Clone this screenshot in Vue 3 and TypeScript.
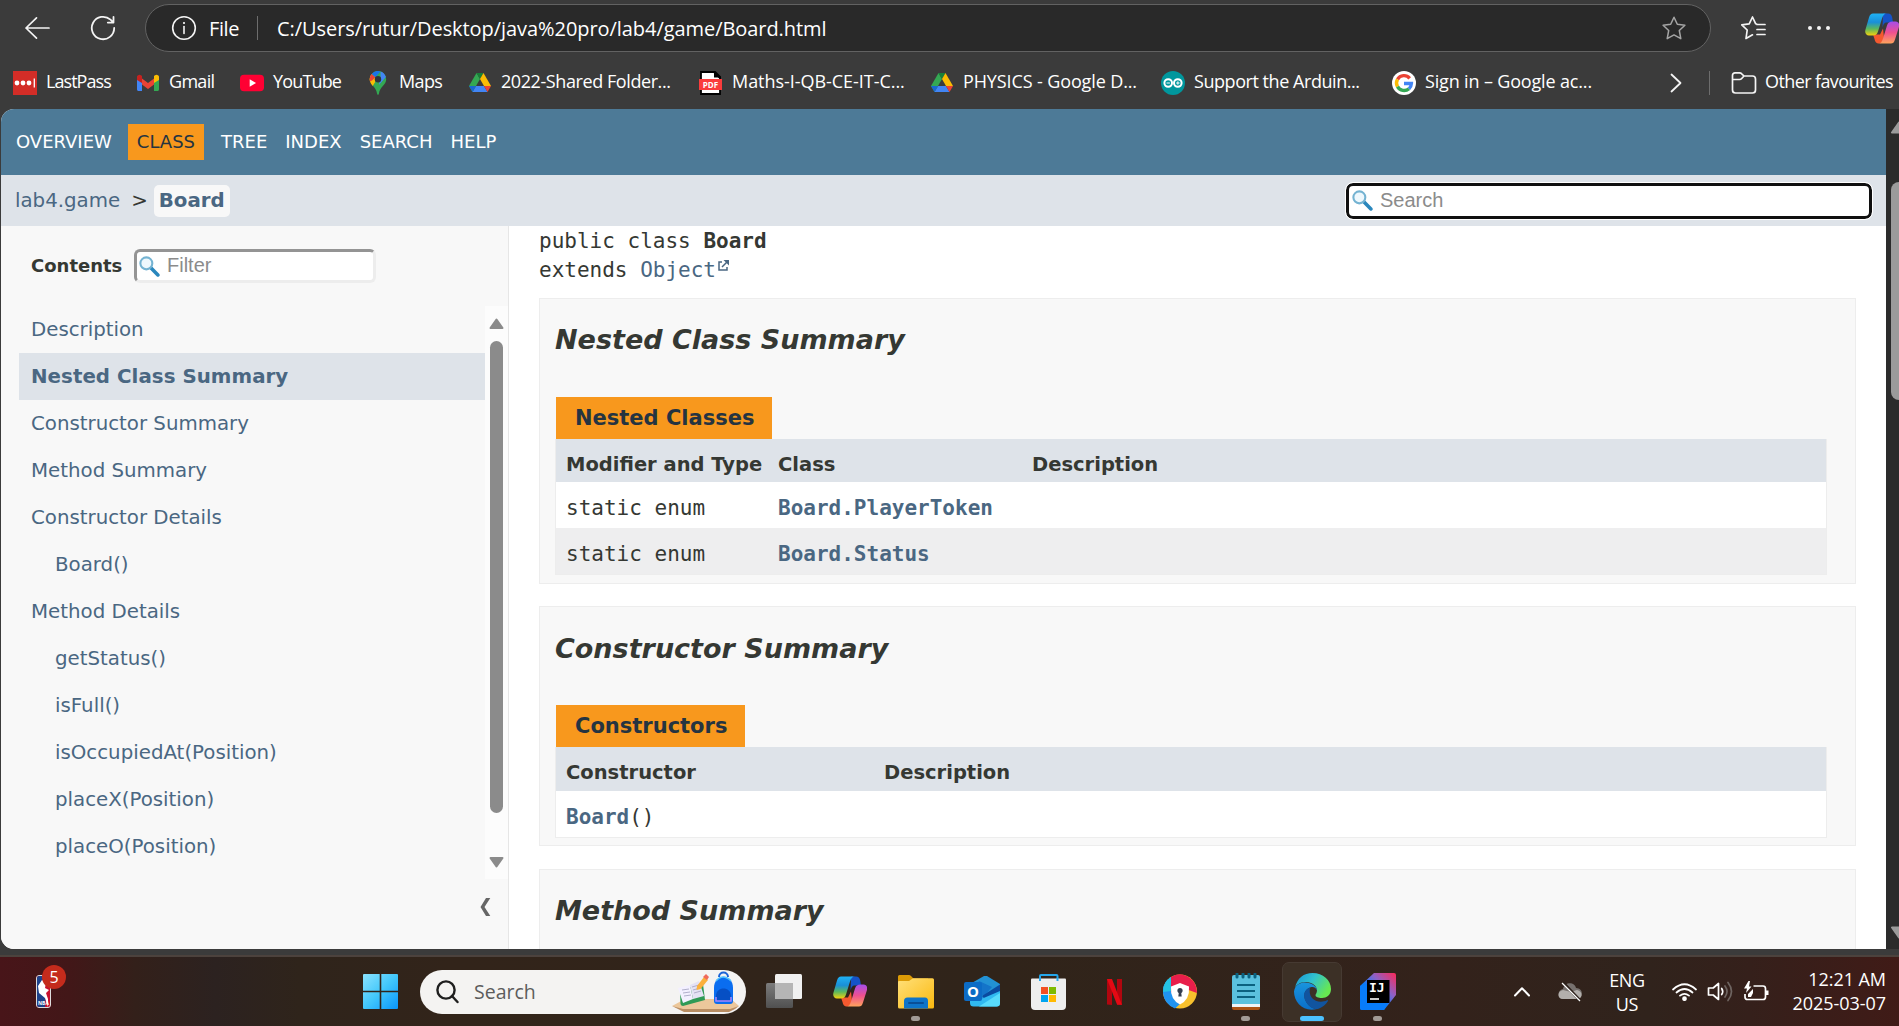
<script setup lang="ts">
interface Bookmark { icon: string; label: string; width: number; spacing: number }
interface TocEntry { label: string; nested?: boolean; active?: boolean }
interface TaskApp { id: string; running?: boolean; active?: boolean }

const bookmarks: Bookmark[] = [
  { icon: 'lastpass', label: 'LastPass', width: 123, spacing: -0.95 },
  { icon: 'gmail', label: 'Gmail', width: 104, spacing: -0.7 },
  { icon: 'youtube', label: 'YouTube', width: 126, spacing: -0.85 },
  { icon: 'maps', label: 'Maps', width: 102, spacing: -0.65 },
  { icon: 'drive', label: '2022-Shared Folder...', width: 231, spacing: -0.42 },
  { icon: 'pdf', label: 'Maths-I-QB-CE-IT-C...', width: 231, spacing: -0.04 },
  { icon: 'drive', label: 'PHYSICS - Google D...', width: 231, spacing: -0.12 },
  { icon: 'arduino', label: 'Support the Arduin...', width: 231, spacing: -0.45 },
  { icon: 'google', label: 'Sign in – Google ac...', width: 231, spacing: -0.16 },
]

const navLinks = ['OVERVIEW', 'CLASS', 'TREE', 'INDEX', 'SEARCH', 'HELP']

const toc: TocEntry[] = [
  { label: 'Description' },
  { label: 'Nested Class Summary', active: true },
  { label: 'Constructor Summary' },
  { label: 'Method Summary' },
  { label: 'Constructor Details' },
  { label: 'Board()', nested: true },
  { label: 'Method Details' },
  { label: 'getStatus()', nested: true },
  { label: 'isFull()', nested: true },
  { label: 'isOccupiedAt(Position)', nested: true },
  { label: 'placeX(Position)', nested: true },
  { label: 'placeO(Position)', nested: true },
]

const nested = ['Board.PlayerToken', 'Board.Status']

const apps: TaskApp[] = [
  { id: 'taskview' },
  { id: 'copilot' },
  { id: 'explorer', running: true },
  { id: 'outlook' },
  { id: 'store' },
  { id: 'netflix' },
  { id: 'secure' },
  { id: 'notepad', running: true },
  { id: 'edge', active: true },
  { id: 'intellij', running: true },
]
</script>

<template>
  <div class="screen">
    <svg class="defs" width="0" height="0">
      <defs>
        <linearGradient id="cpA" x1="0" y1="0" x2="0" y2="1">
          <stop offset="0" stop-color="#1fb2f5" /><stop offset=".4" stop-color="#1a8fd8" /><stop offset=".7" stop-color="#5cb85c" /><stop offset="1" stop-color="#f5d10d" />
        </linearGradient>
        <linearGradient id="cpB" x1="0" y1="0" x2="0" y2="1">
          <stop offset="0" stop-color="#a64dea" /><stop offset=".5" stop-color="#ee5090" /><stop offset="1" stop-color="#ffa35c" />
        </linearGradient>
        <symbol id="copilot" viewBox="0 0 34 30">
          <path d="M18 0h5c2.500 0 3.500 1.500 4.200 4L28 9h-6c-3 0-3.500 2-4.500 5z" fill="#1553c8" />
          <path d="M8 21h7l3-6 1 9c-.5 3-2 6-5 6-3 0-4-2-4.500-4.500z" fill="#f4592f" />
          <path d="M8 0h14c-3 0-4 2-5 5l-4 13c-1 3-2.500 4-5.500 4H4c-3 0-4.500-2.500-3.500-6L4 4c1-3 2-4 4-4z" fill="url(#cpA)" />
          <path d="M26 30H13c3 0 4-2 5-5l4-13c1-3 2.500-4 5.500-4h3c3 0 4.300 2.500 3.300 6L30 26c-1 3-2 4-4 4z" fill="url(#cpB)" />
        </symbol>
        <symbol id="lens" viewBox="0 0 20 20">
          <path d="M11 11l7 7" stroke="#2a87bd" stroke-width="3.400" stroke-linecap="round" />
          <circle cx="7" cy="7" r="5.700" fill="#eef8fd" stroke="#74b3d2" stroke-width="2" />
        </symbol>
      </defs>
    </svg>

    <header class="toolbar">
      <div class="tool back"><svg width="26" height="24" viewBox="0 0 26 24" fill="none" stroke="#f4f4f4" stroke-width="1.700" stroke-linecap="round" stroke-linejoin="round"><path d="M25 12H2M12.500 1.800L2 12l10.500 10.200" /></svg></div>
      <div class="tool reload"><svg width="26" height="26" viewBox="0 0 26 26" fill="none" stroke="#f4f4f4" stroke-width="1.800" stroke-linecap="round" stroke-linejoin="round"><path d="M24.200 13A11.200 11.200 0 1 1 20.500 4.700l2.300 2.200M23.500 2v5.600h-5.700" /></svg></div>
      <div class="address">
        <svg class="info" width="26" height="26" viewBox="0 0 26 26" fill="none" stroke="#f4f4f4" stroke-width="1.600"><circle cx="13" cy="13" r="11.300" /><path d="M13 11.500v7" stroke-linecap="round" /><circle cx="13" cy="8" r=".7" fill="#f4f4f4" stroke-width="1" /></svg>
        <span class="scheme">File</span>
        <i class="bar"></i>
        <span class="url">C:/Users/rutur/Desktop/java%20pro/lab4/game/Board.html</span>
        <svg class="star" width="26" height="26" viewBox="0 0 26 26" fill="none" stroke="#a5a5a5" stroke-width="1.500" stroke-linejoin="round"><path d="M13 2.200l3.300 7 7.600 1-5.600 5.300 1.500 8.200-6.800-3.800-6.800 3.800 1.500-8.200L2.100 10.200l7.600-1z" /></svg>
      </div>
      <div class="tool favs"><svg width="26" height="26" viewBox="0 0 26 26" fill="none" stroke="#f4f4f4" stroke-width="1.700" stroke-linecap="round" stroke-linejoin="round"><path d="M16.500 9l-.8-.2L12.500 2 9.200 8.800l-7.400 1L7.200 15 6 23.500l6.500-3.700M17 9.500h8M17 14.500h8M17 19.500h8" /></svg></div>
      <div class="tool more"><i></i><i></i><i></i></div>
      <svg class="assistant" width="34" height="31"><use href="#copilot" /></svg>
    </header>

    <nav class="bookmarks">
      <a v-for="b in bookmarks" :key="b.label" class="bookmark" :style="{ width: b.width + 'px' }">
        <svg width="24" height="24" viewBox="0 0 24 24">
          <g v-if="b.icon === 'lastpass'"><path fill="#d32d27" d="M0 0h24v24H0z" /><circle cx="4" cy="12" r="2.400" fill="#fff" /><circle cx="10" cy="12" r="2.400" fill="#fff" /><circle cx="16" cy="12" r="2.400" fill="#fff" /><path d="M21.300 7.500v9" stroke="#fff" stroke-width="1.300" /></g>
          <g v-else-if="b.icon === 'gmail'"><path d="M1 5.500v13c0 .8.700 1.500 1.500 1.500H6V8.500z" fill="#4285f4" /><path d="M23 5.500v13c0 .8-.7 1.500-1.500 1.500H18V8.500z" fill="#34a853" /><path d="M6 7.500v6L12 18l6-4.500v-6L12 12z" fill="#ea4335" /><path d="M1 6c0-2 2.500-3 4-1.800l1 .8v7L1 9z" fill="#c5221f" /><path d="M23 6c0-2-2.500-3-4-1.800l-1 .8v7l5-3z" fill="#fbbc04" /></g>
          <g v-else-if="b.icon === 'youtube'"><rect y="3.700" width="24" height="16.500" rx="4" fill="#ff0033" /><path d="M9.700 8.300v7.400l6.300-3.700z" fill="#fff" /></g>
          <g v-else-if="b.icon === 'maps'"><path d="M12 0a8.200 8.200 0 0 0-8.200 8.200c0 6 6.400 7.300 7.300 14.600.3 1.500 1.500 1.500 1.800 0 .9-7.300 7.300-8.600 7.300-14.600A8.200 8.200 0 0 0 12 0z" fill="#34a853" /><path d="M5 12.500A8.200 8.200 0 0 1 5.700 3l3.500 3 0 5-2.500 4z" fill="#fbbc04" /><path d="M5.700 3L9.500 6.200 6 9.500l-2 1C3.300 7.500 4 5 5.700 3z" fill="#ea4335" /><path d="M5.700 3A8.200 8.200 0 0 1 14.500.4L9.500 6.200z" fill="#1a73e8" /><path d="M14.500.4c2.800.9 4.600 2.900 5.400 5.500l-7 8L14.500 6z" fill="#4285f4" /><circle cx="12" cy="8.200" r="3.200" fill="#30343d" /></g>
          <g v-else-if="b.icon === 'drive'"><path d="M8.500 2L1 15l3.500 6L12 8z" fill="#34a853" /><path d="M8.500 2h7L12 8z" fill="#188038" /><path d="M15.500 2L23 15h-7L12 8z" fill="#fbbc04" /><path d="M8 15h8l3.500 6h-15z" fill="#4285f4" /><path d="M16 15h7l-3.500 6z" fill="#ea4335" /><path d="M1 15h7l-3.500 6z" fill="#1967d2" /></g>
          <g v-else-if="b.icon === 'pdf'"><path d="M2 1h13l6 6v16H2z" fill="#fff" stroke="#000" stroke-width="1.800" /><path d="M14 0l8 8v-2.500L16.500 0zM15 1v5.500h6" fill="#000" /><path d="M0 8h23v11H0z" fill="#fa3c3c" /><text x="11.500" y="16.700" text-anchor="middle" class="pdftext">PDF</text></g>
          <g v-else-if="b.icon === 'arduino'"><circle cx="12" cy="12" r="12" fill="#00979d" /><g fill="none" stroke="#fff" stroke-width="2"><circle cx="7.200" cy="12" r="3.800" /><circle cx="16.800" cy="12" r="3.800" /></g><path d="M5.500 12h3.400M15.200 12h3.400M16.900 10.300v3.400" stroke="#fff" /></g>
          <g v-else><circle cx="12" cy="12" r="12" fill="#fff" /><g fill="none" stroke-width="3.400"><path d="M17.700 7.300A7.500 7.500 0 0 0 5.500 8.300" stroke="#ea4335" /><path d="M5.500 8.300a7.500 7.500 0 0 0 0 7.400" stroke="#fbbc04" /><path d="M5.500 15.700a7.500 7.500 0 0 0 11.500 2" stroke="#34a853" /><path d="M17 17.700a7.500 7.500 0 0 0 2.400-5.200H12" stroke="#4285f4" /></g></g>
        </svg>
        <span :style="{ letterSpacing: b.spacing + 'px' }">{{ b.label }}</span>
      </a>
      <svg class="chev" width="12" height="20" viewBox="0 0 12 20" fill="none" stroke="#f4f4f4" stroke-width="1.800" stroke-linecap="round" stroke-linejoin="round"><path d="M1.500 1.500L10.500 10l-9 8.500" /></svg>
      <i class="bar"></i>
      <svg class="folder" width="26" height="24" viewBox="0 0 26 24" fill="none" stroke="#f4f4f4" stroke-width="1.700" stroke-linejoin="round"><path d="M1.500 4.500c0-1.500 1-2.700 2.500-2.700h4.500c1 0 1.600.3 2.200 1L13 5h8.500c1.700 0 3 1.200 3 3v11c0 1.700-1.300 3-3 3h-17c-1.700 0-3-1.300-3-3zM1.500 8.500h7c.9 0 1.600-.3 2.200-1L13 5" /></svg>
      <span class="other">Other favourites</span>
    </nav>

    <div class="viewport">
      <div class="doc">
        <div class="topnav">
          <a v-for="n in navLinks" :key="n" :class="{ current: n === 'CLASS' }">{{ n }}</a>
        </div>
        <div class="subnav">
          <a class="pkg">lab4.game</a><span class="gt">&gt;</span><a class="cls">Board</a>
          <div class="search"><svg width="21" height="21"><use href="#lens" /></svg><span>Search</span></div>
        </div>
        <div class="columns">
          <aside class="toc">
            <div class="tochead"><b>Contents</b><div class="filter"><svg width="21" height="21"><use href="#lens" /></svg><span>Filter</span></div></div>
            <div class="tocbody">
              <ol>
                <li v-for="t in toc" :key="t.label" :class="{ nested: t.nested, active: t.active }">{{ t.label }}</li>
              </ol>
              <div class="scroller">
                <svg width="15" height="11" viewBox="0 0 15 11"><path d="M1.500 10h12L7.500 1.500z" fill="#8b8b8b" stroke="#8b8b8b" stroke-width="2" stroke-linejoin="round" /></svg>
                <i></i>
                <svg class="down" width="15" height="11" viewBox="0 0 15 11"><path d="M1.500 1h12l-6 8.500z" fill="#8b8b8b" stroke="#8b8b8b" stroke-width="2" stroke-linejoin="round" /></svg>
              </div>
            </div>
            <div class="tocfoot"><svg width="11" height="18" viewBox="0 0 11 18"><path d="M6 0h4.300L4.500 9l5.800 9H6L.5 9z" fill="#666" /></svg></div>
          </aside>
          <main>
            <div class="signature"><div>public class <b>Board</b></div><div>extends <a>Object</a><svg width="11" height="11" viewBox="0 0 11 11" fill="none" stroke="#4a6782" stroke-width="1.500"><path d="M4 2H1v8h8V7M4 7l5-5" /><path d="M5.500 0H11v5.500z" fill="#4a6782" stroke="none" /></svg></div></div>
            <section class="first">
              <h2>Nested Class Summary</h2>
              <div class="tab">Nested Classes</div>
              <div class="grid three">
                <div class="row head"><span>Modifier and Type</span><span>Class</span><span>Description</span></div>
                <div v-for="(c, i) in nested" :key="c" class="row" :class="{ alt: i === 1 }"><code>static enum</code><code><b>{{ c }}</b></code><span></span></div>
              </div>
            </section>
            <section class="second">
              <h2>Constructor Summary</h2>
              <div class="tab">Constructors</div>
              <div class="grid two">
                <div class="row head"><span>Constructor</span><span>Description</span></div>
                <div class="row"><code><b>Board</b>()</code><span></span></div>
              </div>
            </section>
            <section class="third"><h2>Method Summary</h2></section>
          </main>
        </div>
      </div>
      <div class="winscroll">
        <svg width="18" height="13" viewBox="0 0 18 13"><path d="M2 11.500h14L9 1.500z" fill="#9b9b9b" stroke="#9b9b9b" stroke-width="2" stroke-linejoin="round" /></svg>
        <i></i>
        <svg class="down" width="18" height="13" viewBox="0 0 18 13"><path d="M2 1.500h14l-7 10z" fill="#9b9b9b" stroke="#9b9b9b" stroke-width="2" stroke-linejoin="round" /></svg>
      </div>
    </div>

    <footer class="taskbar">
      <div class="widgets">
        <svg width="15" height="33" viewBox="0 0 15 33"><rect x=".5" y=".5" width="14" height="32" rx="2.500" fill="#c8102e" stroke="#ddd" /><path d="M1 3q0-2 2-2h5l-2 6 4 10-1 15H3q-2 0-2-2z" fill="#1d428a" /><path d="M6 5l4 3-1 5 4 2-3 3 2 6 0 8-3-9-6-5-1-7 2-3z" fill="#fff" /><text x="2" y="30" class="nba">NBA</text></svg>
        <span class="badge">5</span>
      </div>
      <div class="cell">
        <svg width="35" height="35" viewBox="0 0 35 35"><defs><linearGradient id="win" x1="0" y1="0" x2="1" y2="1" gradientUnits="objectBoundingBox"><stop offset="0" stop-color="#8be3ff" /><stop offset=".5" stop-color="#42c7fb" /><stop offset="1" stop-color="#0995fb" /></linearGradient></defs><path d="M1 0h15.700v16.700H0V1q0-1 1-1zM18.300 0H34q1 0 1 1v15.700H18.300zM0 18.300h16.700V35H1q-1 0-1-1zM18.300 18.300H35V34q0 1-1 1H18.300z" fill="url(#win)" /></svg>
      </div>
      <div class="searchbox">
        <svg class="glass" width="23" height="24" viewBox="0 0 23 24" fill="none" stroke="#1f1f1f" stroke-width="2.400" stroke-linecap="round"><circle cx="10" cy="10" r="8.600" /><path d="M16 16l5.500 6" /></svg>
        <span>Search</span>
        <svg class="art" width="70" height="42" viewBox="0 0 70 42">
          <path d="M1 35L14 28h46l8 7-9 4H12z" fill="#ecc79b" /><path d="M1 35l11 3h47l9-3-4 3-6 3H13z" fill="#b98d63" />
          <path d="M9 19l23-6 2 16-22 6q-2 0-2.500-2z" fill="#2f9a55" /><path d="M7 17l12-3 3 14-10 4z" fill="#f3f0ff" /><path d="M19 14l9-4 5 15-11 3z" fill="#e4e2f4" />
          <path d="M11 19l7-1M12 22l7-1M13 25l7-1M21 16l7-2M22 19l7-2M23 22l7-2" stroke="#a9a7c4" stroke-width=".9" />
          <path d="M26 15l7-9 4 3-7.500 9-4 1z" fill="#fbb03b" /><path d="M32 6l3-3 3 3-2 3z" fill="#ef6a5a" />
          <path d="M48 6c0-6 9-6 9 0" fill="none" stroke="#1a62d6" stroke-width="2" /><path d="M43 17C43 2 62 2 62 17v13q0 3-3 3H46q-3 0-3-3z" fill="#0a6df0" /><path d="M45 10q7-8 15 0" fill="none" stroke="#53c4ff" stroke-width="1.500" /><path d="M45 25c0-10 15-10 15 0v5H45z" fill="#064fc4" /><path d="M45 26v4h15v-4" fill="none" stroke="#a786ff" stroke-width="1.500" />
        </svg>
      </div>
      <div class="apps">
        <div v-for="a in apps" :key="a.id" class="cell" :class="{ active: a.active, running: a.running }">
          <svg v-if="a.id === 'taskview'" width="36" height="35" viewBox="0 0 36 35"><defs><linearGradient id="tvD" x1="0" y1="0" x2="0" y2="1"><stop offset="0" stop-color="#7c7c7c" /><stop offset="1" stop-color="#505050" /></linearGradient></defs><rect x="0" y="9" width="27" height="25" rx="1.500" fill="url(#tvD)" /><rect x="9" y="0" width="27" height="25" rx="1.500" fill="#f0f0f0" /><path d="M9 9h18v16H9z" fill="#b5b5b5" /></svg>
          <svg v-else-if="a.id === 'copilot'" width="34" height="31"><use href="#copilot" /></svg>
          <svg v-else-if="a.id === 'explorer'" width="36" height="34" viewBox="0 0 36 34"><defs><linearGradient id="fo" x1="0" y1="0" x2="1" y2="1"><stop offset="0" stop-color="#ffe07a" /><stop offset="1" stop-color="#fbb90f" /></linearGradient></defs><path d="M0 1.500Q0 0 1.500 0h9.500q1 0 2 1l2.500 2.500H30V10H0z" fill="#dc9b06" /><path d="M0 7q0-1 1-1h10l4-2.700h19.500q1.500 0 1.500 1.500V32q0 1.500-1.500 1.500h-33Q0 33.500 0 32z" fill="url(#fo)" /><path d="M6 33.500V26q0-3.500 3.500-3.500H27q3 0 3 3.500v7.500z" fill="#0f74c8" /><path d="M11 28h14" stroke="#0a4f96" stroke-width="2" stroke-linecap="round" /></svg>
          <svg v-else-if="a.id === 'outlook'" width="36" height="31" viewBox="0 0 36 31"><path d="M6 8L20 0q1.500-.5 3 0l13 8v10L18 25 6 20z" fill="#2291d4" /><path d="M15 5l13 6-8 9-9-5z" fill="#1474c9" /><path d="M18 20L36 8.500V16l-15 7z" fill="#0a4aa0" /><path d="M6 19l9 5L36 15v12q0 3.500-3.500 3.500h-23Q6 30.500 6 27z" fill="#30b9f0" /><path d="M15 30.500L36 17v10q0 3.500-3.500 3.500z" fill="#58dbfb" /><rect y="6" width="18" height="19" rx="2" fill="#0c6cc6" /><text x="9" y="21" text-anchor="middle" class="outlook">O</text></svg>
          <svg v-else-if="a.id === 'store'" width="35" height="36" viewBox="0 0 35 36"><path d="M9 8V2q0-1 1-1h15.500q1 0 1 1v6" fill="none" stroke="#25a6ea" stroke-width="2" /><path d="M1 4.500h33q1 0 1 1V32q0 4-4 4H4q-4 0-4-4V5.500q0-1 1-1z" fill="#eee" /><path d="M9 4v3M26.500 4v3" stroke="#25a6ea" stroke-width="2" /><path d="M10 13h7v7h-7z" fill="#f25022" /><path d="M18 13h7v7h-7z" fill="#7fba00" /><path d="M10 21h7v7h-7z" fill="#00a4ef" /><path d="M18 21h7v7h-7z" fill="#ffb900" /></svg>
          <svg v-else-if="a.id === 'netflix'" width="15" height="26" viewBox="0 0 15 26"><path d="M0 0h5v26l-5-.5zM10 0h5v25.500l-5 .5z" fill="#b1060f" /><path d="M0 0h5l10 26-5-.5z" fill="#e50914" /></svg>
          <svg v-else-if="a.id === 'secure'" width="34" height="35" viewBox="0 0 34 35"><circle cx="17" cy="17.500" r="17" fill="#f7c02d" /><path d="M8 3Q17-3 27 4q7 5 7 15L17 13 8 20Q6 10 8 3z" fill="#e81e4b" /><path d="M8 3Q-1 9 0 19q1 11 12 15.500L17 30 8 18z" fill="#1f93f1" /><path d="M8 3Q0 8 0 18l8-1z" fill="#24c2e3" /><path d="M17 9l9 3.500q1 13-9 18-10-5-9-18z" fill="#fff" /><circle cx="17" cy="16.500" r="2.600" fill="#333d4f" /><path d="M16 17h2l.7 5.500h-3.400z" fill="#333d4f" /></svg>
          <svg v-else-if="a.id === 'notepad'" width="28" height="37" viewBox="0 0 28 37"><path d="M0 30h28v5q0 2-2 2H2q-2 0-2-2z" fill="#aa5215" /><path d="M0 28h28v6H0z" fill="#eef3f6" /><path d="M0 4q0-2 2-2h24q2 0 2 2v27H0z" fill="#5bc1de" /><path d="M5 12h18M5 18h18M5 24h18" stroke="#0b6280" stroke-width="2" /><path d="M5 1v3M11 1v3M17 1v3M23 1v3" stroke="#0b6280" stroke-width="3" stroke-linecap="round" /></svg>
          <svg v-else-if="a.id === 'edge'" width="37" height="37" viewBox="0 0 37 37"><defs><linearGradient id="edA" x1="0" y1="0" x2="1" y2=".5"><stop offset="0" stop-color="#1694d8" /><stop offset=".5" stop-color="#31c2ce" /><stop offset="1" stop-color="#67e851" /></linearGradient><linearGradient id="edB" x1="0" y1="0" x2="0" y2="1"><stop offset="0" stop-color="#1994dd" /><stop offset="1" stop-color="#0a6fc9" /></linearGradient></defs><path d="M1 15C3 5 10 0 18.500 0 29 0 37 7 37 16c0 6-4.500 9-9 9-4 0-6.500-1-6.500-2.700 0-1.300 1.500-2 1.500-5C23 13 18 9 12 9 6 9 2 12 1 15z" fill="url(#edA)" /><path d="M0 18.500C1 12 6 9.500 11 9.500c7 0 11.800 4 12 8-1-3-3.500-4-5.500-3.500C12 15.500 9 20 11 26c1.500 5 6 9.500 12 10C10 39.500 0 30 0 18.500z" fill="url(#edB)" /><path d="M16 14.500C10 17 9 22 11 27c2.500 6 8 9.500 13 9 4.500-1.500 8-4.500 10-8 .4-.7-.3-1-1-.7-5 2.700-12 1.500-15-2.300-2.700-3.400-2.500-7-2-10.500z" fill="#11549f" /></svg>
          <svg v-else width="37" height="37" viewBox="0 0 37 37"><defs><linearGradient id="ij" x1="0" y1="1" x2="1" y2="0"><stop offset=".4" stop-color="#087cfa" /><stop offset=".65" stop-color="#8b62c8" /><stop offset="1" stop-color="#fe2857" /></linearGradient></defs><path d="M0 13L14 0h20q2 0 2 2v20L24 37H2q-2 0-2-2z" fill="url(#ij)" /><path d="M0 13l10-3v20h18l-4 7H2q-2 0-2-2z" fill="#087cfa" /><path d="M7 7h22.500v23H7z" fill="#000" /><text x="9" y="18.500" class="ijtext">IJ</text><path d="M10 26h9" stroke="#fff" stroke-width="1.600" /></svg>
        </div>
      </div>
      <div class="tray">
        <div class="t48"><svg width="18" height="11" viewBox="0 0 18 11" fill="none" stroke="#fff" stroke-width="2" stroke-linecap="round" stroke-linejoin="round"><path d="M2 9.500l7-7.300 7 7.300" /></svg></div>
        <div class="t48"><svg class="cloud" width="26" height="20" viewBox="0 0 26 20"><path d="M6 7C8-1 18 0 19 6c7 0 8 9 2 11H6C0 17 0 8 6 7z" fill="#77716e" /><path d="M6 8l8 2 6-2c6 1 6 9 0 9H6C0 17 0 9 6 8z" fill="#b3afac" /><path d="M6 .5l17 18" stroke="#2d211b" stroke-width="3" /><path d="M5 1l18 18" stroke="#fff" stroke-width="1.200" /></svg></div>
        <div class="lang"><div>ENG</div><div>US</div></div>
        <div class="t36"><svg width="25" height="18" viewBox="0 0 25 18" fill="none" stroke="#fff" stroke-width="1.700" stroke-linecap="round"><path d="M1 6.500Q12.500-4 24 6.500M4.500 9.500q8-7 16 0M8 12.700q4.500-3.700 9 0" /><circle cx="12.500" cy="15.700" r="1.500" fill="#fff" /></svg></div>
        <div class="t36"><svg width="26" height="21" viewBox="0 0 26 21" fill="none" stroke="#fff" stroke-width="1.700" stroke-linecap="round" stroke-linejoin="round"><path d="M1.500 7h4.700l5.300-4.500v16L6.200 14H1.500zM14.700 7.500q2 3 0 6" /><path d="M18 5q4 5.500 0 11M21 1.500q7 9 0 18" stroke="#6e6460" /></svg></div>
        <div class="t36"><svg width="26" height="22" viewBox="0 0 26 22" fill="none" stroke="#fff" stroke-width="1.700" stroke-linejoin="round"><path d="M10.500 5H20q2.500 0 2.500 2.500v8.500q0 2.500-2.500 2.500H4.500Q2 18.500 2 16v-3" /><path d="M24 9.500v4.500" stroke-width="3" /><path d="M5.500 0L1 7.500h3L3 12l5.500-6.500H6L7 0zM5 16v-3l5-5v4L8 16z" fill="#fff" stroke="none" /></svg></div>
        <div class="clock"><div>12:21 AM</div><div>2025-03-07</div></div>
      </div>
    </footer>
  </div>
</template>

<style>
html, body { margin: 0; background: #3b3b3b; overflow: hidden; }
</style>

<style scoped>
* { box-sizing: border-box; }
.screen { width: 1899px; height: 1026px; display: flex; flex-direction: column; overflow: hidden; background: #3b3b3b; font-family: "Open Sans", "Noto Sans", sans-serif; color: #fff; white-space: nowrap; }
.defs { position: absolute; }
svg { display: block; flex: none; }
.toolbar { height: 56px; flex: none; display: flex; align-items: center; padding-left: 13px; }
.tool { display: flex; align-items: center; justify-content: center; width: 48px; height: 56px; }
.reload { margin-left: 18px; margin-right: 18px; }
.address { width: 1566px; height: 48px; border: 1.500px solid #626262; border-radius: 24px; background: #292929; display: flex; align-items: center; padding-left: 25px; font-size: 20px; }
.scheme { margin-left: 12px; width: 48px; letter-spacing: -0.4px; }
.bar { width: 1px; height: 24px; background: #6d6d6d; }
.url { margin-left: 19px; flex: 1; letter-spacing: -0.06px; }
.star { margin-right: 23px; }
.favs { margin-left: 18px; }
.more { gap: 5px; margin-left: 18px; }
.more i { width: 4px; height: 4px; border-radius: 2px; background: #f4f4f4; }
.assistant { margin-left: 22px; }
.bookmarks { height: 53px; flex: none; display: flex; align-items: center; padding-left: 13px; font-size: 18px; }
.bookmarks span { padding-bottom: 3px; }
.bookmark { display: flex; align-items: center; gap: 9px; flex: none; }
.pdftext { font: bold 8px "Open Sans", sans-serif; fill: #fff; }
.chev { margin-left: 47px; margin-right: 27px; }
.folder { margin-left: 21px; margin-right: 8px; }
.other { letter-spacing: -0.6px; }

.viewport { height: 840px; flex: none; display: flex; padding-left: 1px; overflow: hidden; }
.doc { width: 1885px; height: 840px; overflow: hidden; border-radius: 13px 0 0 13px; background: #fff; color: #353833; font-family: "DejaVu Sans", sans-serif; display: flex; flex-direction: column; }
.topnav { height: 66px; flex: none; background: #4d7a97; display: flex; align-items: center; padding-left: 15px; color: #fff; font-size: 18px; }
.topnav a { margin-right: 18px; height: 36px; line-height: 36px; }
.topnav .current { background: #f8981d; color: #253441; padding: 0 9px; margin-left: -2px; margin-right: 17px; }
.subnav { height: 51px; flex: none; background: #dee3e9; display: flex; align-items: center; padding-left: 14px; font-size: 19.800px; color: #4a6782; }
.gt { color: #353833; margin: 0 6px 0 11px; }
.cls { font-weight: bold; background: #f8f8f8; border-radius: 5px; height: 32px; line-height: 31px; padding: 0 5px; }
.search { margin-left: auto; margin-right: 14px; width: 526px; height: 36px; border: 3px solid #101010; outline: 1px solid #fff; border-radius: 7px; background: #fff; display: flex; align-items: center; padding-left: 3px; font: 20px "Liberation Sans", Arial, sans-serif; color: #8b8b8b; }
.search span, .filter span { margin-left: 7px; }
.filter span { padding-bottom: 2px; }
.columns { flex: 1; display: flex; min-height: 0; }
.toc { width: 508px; flex: none; background: #f8f8f8; border-right: 1px solid #e6e6e6; display: flex; flex-direction: column; font-size: 19.800px; }
.tochead { height: 80px; flex: none; display: flex; align-items: center; padding-left: 30px; font-size: 18px; }
.tochead b { width: 103px; padding-bottom: 2px; }
.filter { width: 242px; height: 34px; border: 3px solid; border-color: #949494 #ededed #ededed #949494; border-radius: 6px; background: #fff; display: flex; align-items: center; padding-left: 2px; font: 20px "Liberation Sans", Arial, sans-serif; color: #8b8b8b; }
.tocbody { height: 573px; flex: none; display: flex; overflow: hidden; }
ol { list-style: none; margin: 0; padding: 0 0 0 18px; flex: 1; }
li { height: 47px; line-height: 48px; padding-left: 12px; color: #4a6782; }
li.nested { padding-left: 36px; }
li.active { background: #dee3e9; font-weight: bold; letter-spacing: 0.05px; }
.scroller { width: 23px; background: #fcfcfc; display: flex; flex-direction: column; align-items: center; padding-top: 12px; }
.scroller i { width: 13px; height: 472px; margin-top: 12px; border-radius: 7px; background: #8b8b8b; }
.scroller .down { margin-top: 44px; }
.tocfoot { padding: 19px 0 0 479px; }
main { flex: 1; padding-left: 30px; overflow: hidden; }
.signature { font: 21px/29px "DejaVu Sans Mono", monospace; height: 72px; padding-top: 1px; }
.signature a { color: #4a6782; }
.signature svg { display: inline-block; vertical-align: 6px; margin-left: 2px; }
section { width: 1317px; border: 1px solid #ededed; background: #f8f8f8; padding-left: 15px; }
.first { height: 286px; margin-bottom: 22px; }
.second { height: 240px; margin-bottom: 23px; }
.third { height: 200px; }
h2 { font-size: 27px; font-style: italic; font-weight: bold; margin: 0; height: 98px; padding-top: 24px; line-height: 33px; }
.second h2 { padding-top: 25px; }
.tab { display: inline-block; background: #f8981d; color: #253441; font-weight: bold; font-size: 21px; height: 42px; line-height: 42px; padding: 0 18px 0 19px; margin-left: 1px; vertical-align: top; }
.grid { width: 1272px; border: 1px solid #ededed; border-top: 0; background: #fff; }
.row { display: grid; height: 46px; align-items: center; padding: 6px 0 0 10px; }
.three .row { grid-template-columns: 212px 254px 1fr; }
.two .row { grid-template-columns: 318px 1fr; }
.grid .head { height: 43px; padding-top: 7px; background: #dee3e9; font-weight: bold; font-size: 19.500px; }
.two .head { height: 44px; }
.alt { background: #eeeeef; }
code { font: 21px "DejaVu Sans Mono", monospace; }
code b { color: #4a6782; }
.winscroll { width: 13px; background: #2b2b2b; overflow: hidden; padding: 12px 0 0 4px; }
.winscroll i { display: block; width: 16px; height: 218px; margin: 48px 0 0 1px; border-radius: 8px; background: #9b9b9b; }
.winscroll .down { margin-top: 526px; }

.taskbar { height: 71px; margin-top: 6px; flex: none; border-top: 2px solid #4c423d; background: linear-gradient(90deg, #481519 0, #421718 70px, #33201a 135px, #2c2220 215px, #2f241b 300px, #32241a 450px, #30241a 1000px, #33221b 1450px, #30231c 1650px, #35201b 1750px, #401b17 1899px); display: flex; align-items: center; }
.widgets { width: 347px; height: 69px; padding: 18px 0 0 36px; position: relative; flex: none; }
.nba { font: bold 5px "Open Sans", sans-serif; fill: #fff; }
.badge { position: absolute; left: 42px; top: 8px; width: 24px; height: 24px; border-radius: 12px; background: #c42b1c; text-align: center; font-size: 16px; line-height: 24px; }
.cell { width: 66px; height: 60px; display: flex; align-items: center; justify-content: center; flex: none; position: relative; }
.searchbox { width: 326px; height: 44px; margin: 0 5px 0 7px; border-radius: 22px; background: #f4f3f2; color: #5c5c5c; display: flex; align-items: center; padding-left: 16px; font-size: 19.500px; flex: none; }
.searchbox span { margin-left: 15px; flex: 1; }
.art { margin-right: 5px; }
.apps { display: flex; }
.apps .active::before { content: ""; position: absolute; inset: 0 3px; border: 1px solid #463a32; border-radius: 7px; background: #3c3026; }
.apps .active svg { position: relative; }
.running::after, .apps .active::after { content: ""; position: absolute; left: 28px; bottom: 1px; width: 9px; height: 5px; border-radius: 3px; background: #a29b96; }
.apps .active::after { left: 21px; width: 24px; background: #4cc2ff; }
.tray { display: flex; align-items: center; margin-left: 87px; font-size: 18px; line-height: 24px; flex: none; }
.t48, .t36, .lang { display: flex; align-items: center; justify-content: center; flex: none; }
.t48 { width: 48px; }
.t36 { width: 36px; }
.lang { width: 66px; flex-direction: column; margin-right: 6px; letter-spacing: -0.3px; }
.clock { width: 112px; text-align: right; letter-spacing: -0.05px; margin-top: -2px; }
.outlook { font: bold 15px "Open Sans", sans-serif; fill: #fff; }
.ijtext { font: bold 13px "DejaVu Sans Mono", monospace; fill: #fff; }
</style>
